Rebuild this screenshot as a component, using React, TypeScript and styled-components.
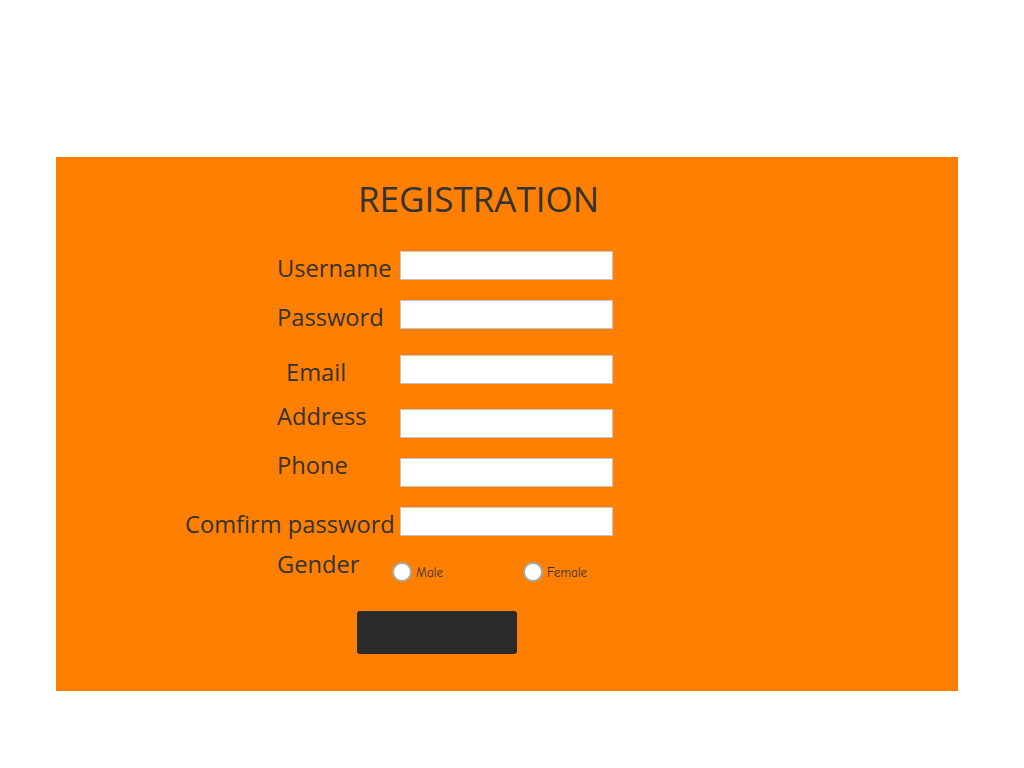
import React from "react";
import styled, { createGlobalStyle } from "styled-components";

const GlobalStyle = createGlobalStyle`
  html, body { margin: 0; padding: 0; background: #ffffff; }
  body { font-family: "Open Sans", "Liberation Sans", sans-serif; color: #333333; }
`;

const Panel = styled.div`
  width: 902px;
  height: 534px;
  margin: 157px 0 0 56px;
  background: #ff7f00;
  box-sizing: border-box;
  padding: 24px 0 0 129px;
`;

const Heading = styled.h1`
  margin: 0 0 0 173px;
  font-family: "Open Sans", "Liberation Sans", sans-serif;
  font-weight: 400;
  font-size: 35px;
  line-height: 35px;
  color: #333333;
`;

const Form = styled.form`
  display: flex;
  flex-direction: column;
`;

const Row = styled.div<{ $top: number }>`
  display: flex;
  align-items: flex-start;
  margin-top: ${(p) => p.$top}px;
`;

const Label = styled.label<{ $pad?: number; $offset?: number; $width?: number }>`
  box-sizing: border-box;
  width: ${(p) => p.$width ?? 215}px;
  padding-left: ${(p) => p.$pad ?? 92}px;
  margin-top: ${(p) => p.$offset ?? 0}px;
  font-size: 23.7px;
  line-height: 28px;
  white-space: nowrap;
  color: #333333;
`;

const TextInput = styled.input<{ $offset?: number }>`
  box-sizing: border-box;
  width: 213px;
  height: 29px;
  margin: ${(p) => p.$offset ?? 0}px 0 0 0;
  padding: 0 4px;
  border: 1px solid #c4c4c4;
  background: #ffffff;
  font-size: 14px;
  outline: none;
`;

const RadioGroup = styled.div`
  display: flex;
  margin-top: 12px;
`;

const RadioOption = styled.label`
  display: flex;
  align-items: center;
  width: 131px;
  gap: 4px;
  font-family: "Comic Sans MS", "Comic Neue", "DejaVu Sans", sans-serif;
  font-size: 13px;
  color: #333333;
`;

const Radio = styled.input`
  appearance: none;
  -webkit-appearance: none;
  margin: 0;
  width: 20px;
  height: 20px;
  border-radius: 50%;
  border: 2px solid #a8a8a8;
  background: #ffffff;
  box-sizing: border-box;
`;

const SubmitButton = styled.button`
  width: 160px;
  height: 43px;
  margin: 29px 0 0 172px;
  border: none;
  border-radius: 3px;
  background: #2a2a2a;
  cursor: pointer;
`;

export default function App() {
  return (
    <>
      <GlobalStyle />
      <Panel>
        <Heading>REGISTRATION</Heading>
        <Form onSubmit={(e) => e.preventDefault()}>
          <Row $top={35}>
            <Label $offset={3}>Username</Label>
            <TextInput type="text" />
          </Row>
          <Row $top={18}>
            <Label $offset={3}>Password</Label>
            <TextInput type="password" />
          </Row>
          <Row $top={24}>
            <Label $offset={3} $pad={101}>Email</Label>
            <TextInput type="email" />
          </Row>
          <Row $top={16}>
            <Label>Address</Label>
            <TextInput type="text" $offset={7} />
          </Row>
          <Row $top={13}>
            <Label>Phone</Label>
            <TextInput type="text" $offset={7} />
          </Row>
          <Row $top={20}>
            <Label $offset={3} $pad={0}>Comfirm password</Label>
            <TextInput type="password" />
          </Row>
          <Row $top={12}>
            <Label $width={207}>Gender</Label>
            <RadioGroup>
              <RadioOption>
                <Radio type="radio" name="gender" value="male" />
                Male
              </RadioOption>
              <RadioOption>
                <Radio type="radio" name="gender" value="female" />
                Female
              </RadioOption>
            </RadioGroup>
          </Row>
          <div>
            <SubmitButton type="submit" />
          </div>
        </Form>
      </Panel>
    </>
  );
}
